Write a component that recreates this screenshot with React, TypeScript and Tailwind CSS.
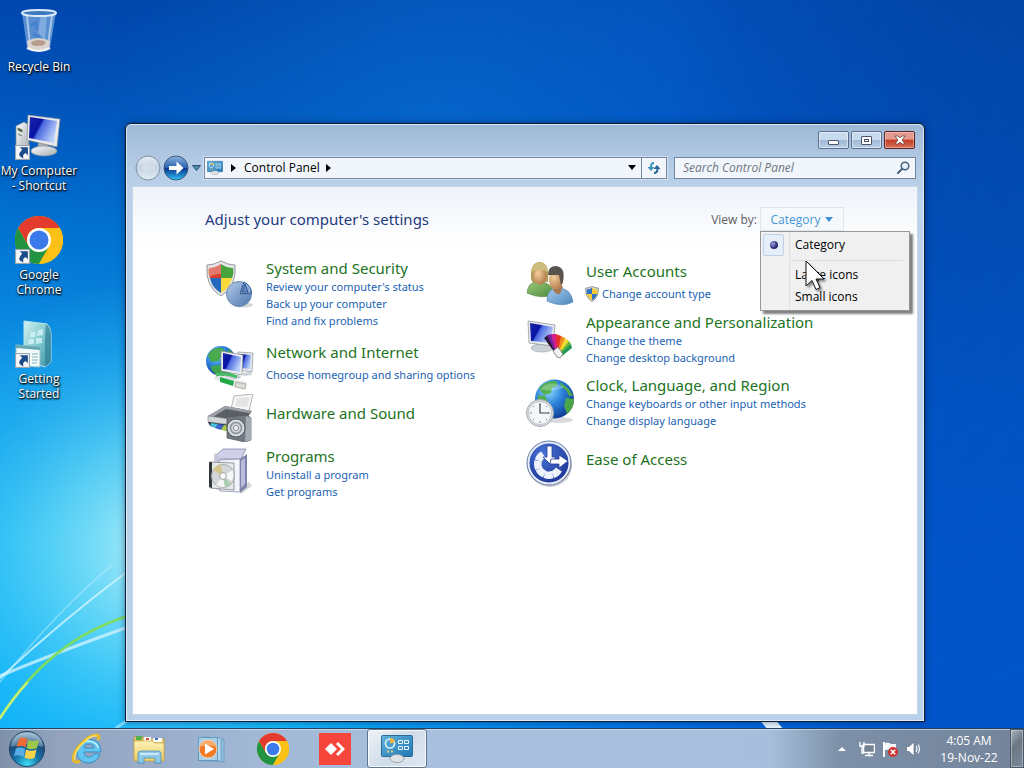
import { useState } from "react"
import type { ReactNode } from "react"

type Category = {
  title: string
  icon: ReactNode
  links: string[]
  shield?: boolean
  className: string
  textClassName?: string
}

function SharedGradients() {
  return (
    <svg className="absolute h-0 w-0" aria-hidden="true">
      <defs>
        <linearGradient id="screen" x1="0" y1="0" x2="1" y2="0.5">
          <stop offset="0" stopColor="#1526a8" />
          <stop offset="0.42" stopColor="#0a12a4" />
          <stop offset="0.5" stopColor="#4a68e0" />
          <stop offset="1" stopColor="#b9d0fa" />
        </linearGradient>
        <radialGradient id="globe" cx="0.35" cy="0.3" r="0.75">
          <stop offset="0" stopColor="#8fdcff" />
          <stop offset="0.45" stopColor="#2f86dc" />
          <stop offset="1" stopColor="#0b3a94" />
        </radialGradient>
        <linearGradient id="metal" x1="0" y1="0" x2="1" y2="1">
          <stop offset="0" stopColor="#ffffff" />
          <stop offset="1" stopColor="#a4abb2" />
        </linearGradient>
        <linearGradient id="orbBlue" x1="0" y1="0" x2="0" y2="1">
          <stop offset="0" stopColor="#8eb4dc" />
          <stop offset="0.48" stopColor="#2b62b4" />
          <stop offset="0.52" stopColor="#0a3590" />
          <stop offset="1" stopColor="#2fc0f4" />
        </linearGradient>
        <linearGradient id="orbGrey" x1="0" y1="0" x2="0" y2="1">
          <stop offset="0" stopColor="#e6eef5" />
          <stop offset="0.5" stopColor="#c4d2df" />
          <stop offset="1" stopColor="#e3eef6" />
        </linearGradient>
        <radialGradient id="orbStart" cx="0.5" cy="0.95" r="0.9">
          <stop offset="0" stopColor="#3fe0f4" />
          <stop offset="0.4" stopColor="#1676ac" />
          <stop offset="0.75" stopColor="#1a4a78" />
          <stop offset="1" stopColor="#7fa6c4" />
        </radialGradient>
        <linearGradient id="panel" x1="0" y1="0" x2="1" y2="1">
          <stop offset="0" stopColor="#62b4de" />
          <stop offset="1" stopColor="#1f76b4" />
        </linearGradient>
        <linearGradient id="teal" x1="0" y1="0" x2="1" y2="1">
          <stop offset="0" stopColor="#d4f2f2" />
          <stop offset="0.6" stopColor="#6fc0c8" />
          <stop offset="1" stopColor="#3a8fa6" />
        </linearGradient>
        <radialGradient id="skin" cx="0.35" cy="0.35" r="0.8">
          <stop offset="0" stopColor="#f6cf9f" />
          <stop offset="1" stopColor="#a8713f" />
        </radialGradient>
        <linearGradient id="greenShirt" x1="0" y1="0" x2="1" y2="1">
          <stop offset="0" stopColor="#9cc878" />
          <stop offset="1" stopColor="#4c8a3c" />
        </linearGradient>
        <linearGradient id="blueShirt" x1="0" y1="0" x2="1" y2="1">
          <stop offset="0" stopColor="#a6cdf0" />
          <stop offset="1" stopColor="#4d86bc" />
        </linearGradient>
        <linearGradient id="folder" x1="0" y1="0" x2="0" y2="1">
          <stop offset="0" stopColor="#fdf3b8" />
          <stop offset="1" stopColor="#eccb62" />
        </linearGradient>
        <radialGradient id="access" cx="0.4" cy="0.3" r="0.8">
          <stop offset="0" stopColor="#4a74d8" />
          <stop offset="1" stopColor="#152c8c" />
        </radialGradient>
        <linearGradient id="pie" x1="0" y1="0" x2="1" y2="1">
          <stop offset="0" stopColor="#b7cdea" />
          <stop offset="1" stopColor="#4a74ac" />
        </linearGradient>
      </defs>
    </svg>
  )
}

function Wallpaper() {
  return (
    <svg className="absolute inset-0 h-full w-full" viewBox="0 0 1024 768" preserveAspectRatio="none" aria-hidden="true">
      <defs>
        <linearGradient id="sky" x1="0" y1="0" x2="0" y2="1">
          <stop offset="0" stopColor="#0149b2" />
          <stop offset="0.14" stopColor="#0158c0" />
          <stop offset="0.3" stopColor="#0279d8" />
          <stop offset="0.5" stopColor="#109cec" />
          <stop offset="0.7" stopColor="#1cb8f6" />
          <stop offset="1" stopColor="#0ab0fa" />
        </linearGradient>
        <linearGradient id="rightShade" x1="0" y1="0" x2="1" y2="0">
          <stop offset="0.28" stopColor="#0058d0" stopOpacity="0" />
          <stop offset="0.65" stopColor="#0064e4" stopOpacity="0.85" />
          <stop offset="0.92" stopColor="#0054c8" />
        </linearGradient>
        <linearGradient id="topShade" x1="0" y1="0" x2="0" y2="1">
          <stop offset="0" stopColor="#043f96" stopOpacity="0.85" />
          <stop offset="0.3" stopColor="#0346a4" stopOpacity="0.7" />
          <stop offset="1" stopColor="#0060dc" stopOpacity="0" />
        </linearGradient>
        <linearGradient id="shadeMask" x1="0" y1="0" x2="1" y2="0">
          <stop offset="0" stopColor="#222" />
          <stop offset="1" stopColor="#ccc" />
        </linearGradient>
        <mask id="fadeRight">
          <rect width="1024" height="768" fill="url(#shadeMask)" />
        </mask>
        <radialGradient id="glow" gradientUnits="userSpaceOnUse" cx="160" cy="550" r="270">
          <stop offset="0" stopColor="#c0f4fa" stopOpacity="0.95" />
          <stop offset="0.4" stopColor="#7ce4f8" stopOpacity="0.6" />
          <stop offset="0.75" stopColor="#40ccf8" stopOpacity="0.25" />
          <stop offset="1" stopColor="#40c8f8" stopOpacity="0" />
        </radialGradient>
        <radialGradient id="topGlow" gradientUnits="userSpaceOnUse" cx="430" cy="140" r="330">
          <stop offset="0" stopColor="#0a78dc" stopOpacity="0.5" />
          <stop offset="1" stopColor="#0a78dc" stopOpacity="0" />
        </radialGradient>
      </defs>
      <rect width="1024" height="768" fill="url(#sky)" />
      <rect width="1024" height="768" fill="url(#rightShade)" />
      <rect width="1024" height="768" fill="url(#topShade)" mask="url(#fadeRight)" />
      <rect width="1024" height="768" fill="url(#topGlow)" />
      <rect width="450" height="768" fill="url(#glow)" />
      <g fill="none" strokeLinecap="round">
        <path d="M0 678Q60 622 128 571" stroke="#d4f6ff" strokeWidth="2" opacity="0.8" />
        <path d="M0 682Q60 608 112 565" stroke="#c4f2ff" strokeWidth="1.5" opacity="0.5" />
        <path d="M0 676Q50 655 128 627" stroke="#d4f6ff" strokeWidth="3" opacity="0.75" />
        <path d="M0 718Q50 640 128 616" stroke="#7fdc5c" strokeWidth="2.5" />
        <path d="M0 718Q14 697 27 683" stroke="#c8f078" strokeWidth="2.5" />
        <path d="M116 728L128 720" stroke="#a8e8ff" strokeWidth="3" opacity="0.7" />
      </g>
      <path d="M758 718L774 718L784 730L768 730Z" fill="#e8f6ff" />
    </svg>
  )
}

function RecycleBinIcon() {
  return (
    <svg viewBox="0 0 48 48" className="h-12 w-12" aria-hidden="true">
      <path d="M7 4L12 40Q24 47 35 40L41 4Z" fill="#8fb9e4" opacity="0.62" />
      <path d="M12 8L15 37M37 8L33 37" stroke="#e4f2ff" strokeWidth="2" opacity="0.55" />
      <path d="M26 6L32 7L30 32L23 25Z" fill="#c9e0f8" opacity="0.35" />
      <path d="M16 18L21 14L22 22M18 26L25 29" stroke="#3978cc" strokeWidth="3" fill="none" opacity="0.6" />
      <path d="M12 33Q23 27 35 33L34 41Q24 46 13 41Z" fill="#d9d4d0" />
      <path d="M16 34Q24 30 31 34L29 37Q23 39 17 37Z" fill="#b89c8c" />
      <ellipse cx="24" cy="5" rx="17" ry="3" fill="#3e78bc" stroke="#dcebfa" strokeWidth="2" />
      <path d="M12 40Q24 46 35 40" stroke="#f2f5f8" strokeWidth="2" fill="none" />
    </svg>
  )
}

function ComputerIcon() {
  return (
    <svg viewBox="0 0 48 48" className="h-12 w-12" aria-hidden="true">
      <path d="M1 14L9 10L14 13V33L7 39L1 36Z" fill="url(#metal)" stroke="#7a8590" strokeWidth="0.7" />
      <path d="M3 16L7 18V20L3 18ZM3 22L7 24" stroke="#5f7a48" fill="#47545e" />
      <path d="M24 28L32 30L34 37L22 37Z" fill="#a9b0b8" />
      <ellipse cx="29" cy="39" rx="13" ry="5" fill="url(#metal)" stroke="#87909a" strokeWidth="0.7" />
      <path d="M13 3L45 7L42 35L12 28Z" fill="#e9eaea" stroke="#7f8992" strokeWidth="0.7" />
      <path d="M15 5L42 9L39 31L14 26Z" fill="url(#screen)" />
    </svg>
  )
}

function ChromeIcon({ className }: { className: string }) {
  return (
    <svg viewBox="0 0 48 48" className={className} aria-hidden="true">
      <circle cx="24" cy="24" r="24" fill="#fbc116" />
      <path d="M3.2 12A24 24 0 0 0 24 48L34.4 30L24 24L13.6 30Z" fill="#229342" />
      <path d="M24 12H44.8A24 24 0 0 1 24 48L34.4 30Z" fill="#fbc116" />
      <path d="M3.2 12A24 24 0 0 1 44.8 12H24A12 12 0 0 0 13.6 30Z" fill="#e33b2e" />
      <circle cx="24" cy="24" r="12" fill="#fff" />
      <circle cx="24" cy="24" r="9.5" fill="#3c79ea" />
    </svg>
  )
}

function GettingStartedIcon() {
  return (
    <svg viewBox="0 0 48 48" className="h-12 w-12" aria-hidden="true">
      <path d="M9 1L32 4Q37 9 36 20V42L30 47L9 40Z" fill="url(#teal)" stroke="#b8e4ea" />
      <path d="M31 4Q37 9 36 20V42L30 47V18Z" fill="#328096" opacity="0.7" />
      <path d="M16 12L21 12L20 17L15 17ZM23 10L28 9L28 15L22 16ZM14 19L19 19L19 24L13 24ZM21 18L27 18V23L21 24Z" fill="#d8f6f8" opacity="0.75" />
      <path d="M1 25L25 27V47L1 46Z" fill="#f2fafa" stroke="#91bcc2" />
      <path d="M1 25L25 27V30L1 28Z" fill="#5fa8b4" />
      <path d="M17 34H23M17 37H23M17 40H23M17 43H22" stroke="#7eb4be" />
    </svg>
  )
}

function ShortcutArrow() {
  return (
    <svg viewBox="0 0 14 14" className="absolute bottom-0 left-0 h-[15px] w-[15px]" aria-hidden="true">
      <rect x="0.5" y="0.5" width="13" height="13" fill="#f4f6f8" stroke="#9aa6b2" />
      <path d="M4.500 2H12V9.500L9.800 7.400Q6.500 9 8 12.500Q0.500 10 6.800 4.500Z" fill="#1d4a88" />
    </svg>
  )
}

function Shield({ className }: { className: string }) {
  return (
    <svg viewBox="0 0 32 38" className={className} aria-hidden="true">
      <path d="M16 1Q23 5 31 5Q32 27 16 37Q0 27 1 5Q9 5 16 1Z" fill="#dcdfe2" stroke="#7c8288" strokeWidth="2" />
      <path d="M16 4V19H4Q3 14 4 8Q10 8 16 4Z" fill="#3474c4" />
      <path d="M16 4V19H28Q29 14 28 8Q22 8 16 4Z" fill="#f4c93a" />
      <path d="M4 19H16V34Q6 28 4 19Z" fill="#f4c93a" />
      <path d="M28 19H16V34Q26 28 28 19Z" fill="#3474c4" />
    </svg>
  )
}

function SecurityIcon() {
  return (
    <svg viewBox="0 0 48 48" className="h-12 w-12" aria-hidden="true">
      <path d="M15 1Q22 5 29 5Q31 27 15 36Q-1 27 1 5Q8 5 15 1Z" fill="#e4e6e8" stroke="#95999e" />
      <path d="M15 4V18H4Q2 14 3 8Q9 8 15 4Z" fill="#d6402c" />
      <path d="M15 4V18H26Q28 14 27 8Q21 8 15 4Z" fill="#45a43c" />
      <path d="M4 18H15V33Q6 28 4 18Z" fill="#2668bc" />
      <path d="M26 18H15V33Q24 28 26 18Z" fill="#f8d83a" />
      <path d="M3 8Q9 8 15 4V14Q8 14 3 17Z" fill="#fff" opacity="0.3" />
      <ellipse cx="37" cy="45" rx="10" ry="2.500" fill="#9098a2" opacity="0.4" />
      <circle cx="33" cy="34" r="12.500" fill="url(#pie)" stroke="#6a88b0" />
      <path d="M34 34L38 22A13 13 0 0 1 45.500 33Z" fill="#8eafda" stroke="#33578e" />
      <path d="M36 32L39 24L42 32Z" fill="#5f8cc8" stroke="#33578e" />
    </svg>
  )
}

function NetworkIcon() {
  return (
    <svg viewBox="0 0 48 48" className="h-12 w-12" aria-hidden="true">
      <circle cx="15" cy="17" r="15" fill="url(#globe)" />
      <path d="M2 11Q7 2 16 4L21 9L15 12L13 17L5 18ZM22 5L28 10L26 15L22 12ZM5 22L14 21L18 28L12 31Q5 28 5 22Z" fill="#45a83c" opacity="0.9" />
      <path d="M32 8L47 9L46 28L32 26Z" fill="#e5e7ea" stroke="#8c939a" strokeWidth="0.7" />
      <path d="M34 10L45 11L44 25L34 24Z" fill="url(#screen)" />
      <path d="M36 29L45 28L46 31L38 32Z" fill="#cdd2d6" />
      <ellipse cx="27" cy="33" rx="8" ry="2.6" fill="#c8cdd2" />
      <path d="M15 7L37 11L36 31L15 27Z" fill="#eceeef" stroke="#858c94" strokeWidth="0.7" />
      <path d="M17 9L35 13L34 28L17 25Z" fill="url(#screen)" />
      <path d="M9 32Q20 37 40 41" stroke="#e4e8e8" strokeWidth="6" fill="none" />
      <path d="M14 33L28 37L27 42L14 38Z" fill="#24a848" />
      <path d="M30 38L40 40L39 45L29 43Z" fill="#dcdcd8" stroke="#96968e" strokeWidth="0.7" />
      <path d="M10 31Q20 28 31 33" stroke="#48bc64" strokeWidth="3" fill="none" />
    </svg>
  )
}

function HardwareIcon() {
  return (
    <svg viewBox="0 0 48 48" className="h-12 w-12" aria-hidden="true">
      <path d="M28 2L47 0L43 17L25 15Z" fill="#f6f6f6" stroke="#9da2a8" strokeWidth="0.8" />
      <path d="M31 4L44 3L41 13L29 12Z" fill="#e2e4e6" />
      <path d="M2 22L19 12L46 17L38 28Z" fill="#5b6066" />
      <path d="M2 22L19 12L46 17L43 19L20 15L5 24Z" fill="#9ca1a7" />
      <path d="M2 22L37 27V32L2 28Z" fill="#d4d7da" stroke="#868c92" strokeWidth="0.7" />
      <path d="M2 28L24 31L21 37L4 32Z" fill="#232a32" />
      <path d="M5 29L12 30L10 34L4 32Z" fill="#49bcdc" />
      <path d="M12 30L18 31L15 36L9 34Z" fill="#3d62cc" />
      <path d="M18 31L24 32L21 37L15 36Z" fill="#a9cc48" />
      <path d="M21 23L41 21L45 24V46L39 48L21 44Z" fill="#737980" stroke="#4f555c" strokeWidth="0.7" />
      <path d="M40 22L45 24V46L39 48Z" fill="#a4abb4" />
      <circle cx="30" cy="34" r="9" fill="#d5d9dd" stroke="#555b61" />
      <circle cx="30" cy="34" r="5.500" fill="none" stroke="#8a929a" strokeWidth="1.5" />
      <circle cx="30" cy="34" r="2.600" fill="#eceff1" stroke="#868e96" />
    </svg>
  )
}

function ProgramsIcon() {
  return (
    <svg viewBox="0 0 48 48" className="h-12 w-12" aria-hidden="true">
      <path d="M35 46L46 38L43 34L34 40Z" fill="#98989e" opacity="0.4" />
      <path d="M9 8L17 1H40L35 11H10Z" fill="#cfd0ea" stroke="#8789aa" strokeWidth="0.8" />
      <path d="M8 5L15 10V43L9 40Z" fill="#c6c7da" />
      <path d="M13 12L34 11V44L14 43Z" fill="#f4f4fb" stroke="#8d90b2" strokeWidth="0.8" />
      <path d="M34 11L41 6V39L34 45Z" fill="#8083ac" />
      <path d="M35 13L39 10V36L35 40Z" fill="#babcdb" />
      <path d="M4 14L28 15V42L4 40Z" fill="#e6e8e8" stroke="#7f8588" strokeWidth="0.8" />
      <path d="M3 14H6V40L3 39Z" fill="#33373a" />
      <circle cx="17" cy="28" r="11.500" fill="#d4d6d8" stroke="#a4a8ac" />
      <path d="M17 28L7 22Q10 17 15 17Z" fill="#d4c489" />
      <path d="M17 28L27 22Q28 28 26 33Z" fill="#f6f7f8" />
      <path d="M17 28L10 37Q15 40 19 39Z" fill="#f4f4f4" />
      <path d="M17 28L25 36Q22 39 19 39Z" fill="#a9cdb1" />
      <circle cx="17" cy="28" r="3.400" fill="#fff" stroke="#9ba0a4" />
    </svg>
  )
}

function UsersIcon() {
  return (
    <svg viewBox="0 0 48 48" className="h-12 w-12" aria-hidden="true">
      <path d="M1 33Q2 21 13 22Q26 22 28 34Q17 40 1 33Z" fill="url(#greenShirt)" stroke="#5c8a4a" strokeWidth="0.7" />
      <path d="M5 19Q4 3 13 2Q24 2 22 22L7 23Z" fill="#b39a58" />
      <ellipse cx="14" cy="16" rx="6.500" ry="8.500" fill="url(#skin)" />
      <path d="M5 12Q6 2 14 2Q22 3 22 12Q14 7 5 12Z" fill="#cdbd7c" />
      <path d="M21 41Q21 28 32 28Q45 28 47 42Q36 48 21 41Z" fill="url(#blueShirt)" stroke="#5a88b4" strokeWidth="0.7" />
      <path d="M27 26H37L34 34Q30 35 27 30Z" fill="#a87850" />
      <ellipse cx="30" cy="20" rx="7" ry="9.500" fill="url(#skin)" />
      <path d="M22 15Q22 6 30 6Q40 7 37 22L35 25L33 15Z" fill="#5a5450" />
    </svg>
  )
}

function AppearanceIcon() {
  return (
    <svg viewBox="0 0 48 48" className="h-12 w-12" aria-hidden="true">
      <ellipse cx="16" cy="32" rx="11" ry="4" fill="#cbd0d4" stroke="#9ba2a8" strokeWidth="0.6" />
      <path d="M2 5L29 9L27 30L3 27Z" fill="#e9ebec" stroke="#878e95" strokeWidth="0.7" />
      <path d="M4 7L27 11L25 27L5 25Z" fill="url(#screen)" />
      <path d="M31 40L18 22L22 19L34 37Z" fill="#2d1738" />
      <path d="M31 40L21 19L26 18L35 37Z" fill="#7422a4" />
      <path d="M31 40L25 18L30 18L36 38Z" fill="#d4218c" />
      <path d="M31 40L30 18L35 20L36 38Z" fill="#e62f28" />
      <path d="M31 40L35 20L39 22L36 38Z" fill="#f38b20" />
      <path d="M31 40L39 22L43 25L36 39Z" fill="#f3dc30" />
      <path d="M31 40L43 25L45 28L36 40Z" fill="#68b83c" />
      <path d="M31 40L45 28L46 32L36 40Z" fill="#249854" />
      <path d="M27 35L32 31L37 38L34 42L31 41Z" fill="#f3f3f3" stroke="#63666a" strokeWidth="0.7" />
    </svg>
  )
}

function ClockIcon() {
  return (
    <svg viewBox="0 0 48 48" className="h-12 w-12" aria-hidden="true">
      <ellipse cx="33" cy="41" rx="14" ry="3" fill="#8f959c" opacity="0.35" />
      <circle cx="28.500" cy="20" r="19.500" fill="url(#globe)" />
      <path d="M13 9Q20 1 30 2L32 6L26 9L25 14L18 16L15 12ZM34 3L43 10L47 17L43 17L40 11L35 8ZM40 19L48 20Q48 30 41 35L38 27ZM12 16L19 17L22 22L12 24Z" fill="#52ae40" opacity="0.9" />
      <path d="M14 10Q24 0 38 8Q30 14 14 10Z" fill="#fff" opacity="0.25" />
      <circle cx="14" cy="34" r="13.500" fill="#d5d9dc" stroke="#a8aeb4" />
      <circle cx="14" cy="34" r="11.500" fill="#f4f6f7" stroke="#c0c5c9" />
      <path d="M14 24V26M14 42V44M4 34H6M22 34H24M7 27L8 28M21 27L20 28M7 41L8 40M21 41L20 40" stroke="#7d858c" />
      <path d="M14 25V34H23" stroke="#3f464d" strokeWidth="1.2" fill="none" />
    </svg>
  )
}

// Spokes of the access wheel, the two upper-right ones are replaced by arrows
const wheelAngles = [140, 182, 224, 266, 308]

function EaseIcon() {
  return (
    <svg viewBox="0 0 48 48" className="h-12 w-12" aria-hidden="true">
      <circle cx="24" cy="25" r="22" fill="#79808a" opacity="0.4" />
      <circle cx="23" cy="23" r="22" fill="url(#access)" stroke="#6f7f9c" />
      <circle cx="23" cy="23" r="20.500" fill="none" stroke="#e8eef7" strokeWidth="2" />
      {wheelAngles.map((angle) => (
        <path key={angle} d="M20 17L18 10Q23 8 28 10L26 17Q23 16 20 17Z" fill="#eef2fa" transform={`rotate(${angle} 23 24)`} />
      ))}
      <path d="M21 6H26V17H30L24 24L17 17H21Z" fill="#fff" stroke="#244098" strokeWidth="0.8" />
      <path d="M25 19H33V15L42 21L33 28V24H24Z" fill="#fff" stroke="#244098" strokeWidth="0.8" />
    </svg>
  )
}

function ControlPanelIcon({ className }: { className: string }) {
  return (
    <svg viewBox="0 0 32 28" className={className} aria-hidden="true">
      <rect x="0.5" y="0.5" width="31" height="21" rx="1" fill="url(#panel)" stroke="#2e6a96" />
      <circle cx="9" cy="8.500" r="4.500" fill="none" stroke="#e2f2fb" strokeWidth="1.6" />
      <path d="M9 8.500V3A5 5 0 0 1 14 7Z" fill="#f4b53c" />
      <path d="M17.500 5.500H21.500V8.500H17.500ZM23.500 5.500H27.500V8.500H23.500ZM17.500 11.500H21.500V14.500H17.500ZM23.500 11.500H27.500V14.500H23.500Z" fill="none" stroke="#e8f6fd" />
      <path d="M6 16.500H8M10 16.500H12" stroke="#f0d070" strokeWidth="2" />
      <ellipse cx="16" cy="23.500" rx="7" ry="4" fill="#dfe3e6" stroke="#8e979e" strokeWidth="0.8" />
    </svg>
  )
}

function StartOrb() {
  return (
    <svg viewBox="0 0 38 38" className="h-[38px] w-[38px]" aria-hidden="true">
      <circle cx="19" cy="19" r="17.500" fill="url(#orbStart)" stroke="#1c4468" />
      <path d="M3 17Q4 3 19 2.500Q34 3 35 17Q19 11 3 17Z" fill="#fff" opacity="0.3" />
      <path d="M11 9Q15 6 19.500 9L17.500 17.500Q14 15 8.500 17Z" fill="#ee6b35" />
      <path d="M20.500 9.500Q25 12.500 31 9.500L29 18Q23 20.500 18.500 18Z" fill="#9cc84a" />
      <path d="M8 18.500Q13 16.500 17 19L15.500 27Q11.500 24 6 26Z" fill="#58aee4" />
      <path d="M18 19.500Q23 22 28.500 19.500L26.500 28Q21 30 16.500 27.500Z" fill="#f9d24a" />
    </svg>
  )
}

function ExplorerIcon() {
  return (
    <svg viewBox="0 0 32 32" className="h-8 w-8" aria-hidden="true">
      <path d="M1 4H10L12 6H31V26H1Z" fill="#e5c86c" stroke="#b8953c" strokeWidth="0.7" />
      <path d="M3 3H9V7H3Z" fill="#58b04c" />
      <path d="M11 4H18V8H11ZM20 5H29V9H20Z" fill="#fff" />
      <path d="M13 6H16" stroke="#d24a32" strokeWidth="2" />
      <path d="M22 6H25" stroke="#3e7ac4" strokeWidth="2" />
      <path d="M1 8H19L22 10H31V28H1Z" fill="url(#folder)" stroke="#c5a346" strokeWidth="0.7" />
      <path d="M5 30V21Q5 18 8 18H25Q28 18 28 21V30H22V25H11V30Z" fill="#8fc8e8" stroke="#4a90b8" strokeWidth="0.8" />
      <path d="M7 21H26" stroke="#dcf0fa" strokeWidth="1.5" />
    </svg>
  )
}

function MediaPlayerIcon() {
  return (
    <svg viewBox="0 0 30 30" className="h-[30px] w-[30px]" aria-hidden="true">
      <path d="M9 3L28 5V28L9 26Z" fill="#91bddd" stroke="#6ea0c4" />
      <path d="M6 3L25 4V27L6 27Z" fill="#b3d6ec" stroke="#6ea4c8" />
      <rect x="2.500" y="3.500" width="19" height="23" fill="#a9cfe8" stroke="#5f9ac0" />
      <circle cx="12" cy="15" r="9" fill="#ee7a26" stroke="#f9d3ad" />
      <path d="M4 13Q5 6 12 6Q19 7 20 13Q12 10 4 13Z" fill="#ffc796" opacity="0.6" />
      <path d="M9 9.500V20.500L18 15Z" fill="#fff" />
    </svg>
  )
}

function ExplorerE() {
  return (
    <svg viewBox="0 0 32 32" className="h-8 w-8" aria-hidden="true">
      <path d="M30 19H13Q13 24 18 24Q21 24 23 21H29Q26 30 17 30Q6 29 6 18Q7 6 18 6Q30 7 30 19ZM13 15H23Q23 11 18 11Q13 11 13 15Z" fill="#62c4f0" stroke="#2486c0" strokeWidth="0.8" />
      <path d="M9 13Q12 8 18 8Q26 9 27 15" stroke="#c6eefc" strokeWidth="1.5" fill="none" />
      <path d="M27 7Q29 2 26 2Q19 1 9 12Q0 23 3 28Q5 30 9 28" stroke="#e8b922" strokeWidth="3" fill="none" />
      <path d="M26 3Q19 2 10 12Q2 21 4 27" stroke="#ffe976" strokeWidth="1.2" fill="none" />
    </svg>
  )
}

function AnyDeskIcon() {
  return (
    <svg viewBox="0 0 32 32" className="h-8 w-8" aria-hidden="true">
      <rect width="32" height="32" fill="#f6453a" />
      <path d="M12 10L18 16L12 22L6 16Z" fill="#fff" />
      <path d="M17 11L19 9L26 16L19 23L17 21L22 16Z" fill="#fff" />
    </svg>
  )
}

const desktopIcons = [
  { label: "Recycle Bin", icon: <RecycleBinIcon />, shortcut: false },
  { label: "My Computer - Shortcut", icon: <ComputerIcon />, shortcut: true },
  { label: "Google Chrome", icon: <ChromeIcon className="h-12 w-12" />, shortcut: true, narrow: true },
  { label: "Getting Started", icon: <GettingStartedIcon />, shortcut: true, narrow: true },
]

const leftCategories: Category[] = [
  {
    title: "System and Security",
    icon: <SecurityIcon />,
    links: ["Review your computer's status", "Back up your computer", "Find and fix problems"],
    className: "items-start",
  },
  {
    title: "Network and Internet",
    icon: <NetworkIcon />,
    links: ["Choose homegroup and sharing options"],
    className: "mt-[13px] items-start",
  },
  {
    title: "Hardware and Sound",
    icon: <HardwareIcon />,
    links: [],
    className: "items-start",
    textClassName: "pt-[11px]",
  },
  {
    title: "Programs",
    icon: <ProgramsIcon />,
    links: ["Uninstall a program", "Get programs"],
    className: "mt-1 items-start",
  },
]

const rightCategories: Category[] = [
  {
    title: "User Accounts",
    icon: <UsersIcon />,
    links: ["Change account type"],
    shield: true,
    className: "items-start",
    textClassName: "pt-[3px]",
  },
  {
    title: "Appearance and Personalization",
    icon: <AppearanceIcon />,
    links: ["Change the theme", "Change desktop background"],
    className: "mt-1 items-center",
  },
  {
    title: "Clock, Language, and Region",
    icon: <ClockIcon />,
    links: ["Change keyboards or other input methods", "Change display language"],
    className: "mt-[9px] items-center",
  },
  {
    title: "Ease of Access",
    icon: <EaseIcon />,
    links: [],
    className: "mt-[9px] items-start",
    textClassName: "pt-[11px]",
  },
]

const taskbarApps = [
  { name: "Internet Explorer", icon: <ExplorerE /> },
  { name: "Windows Explorer", icon: <ExplorerIcon /> },
  { name: "Windows Media Player", icon: <MediaPlayerIcon /> },
  { name: "Google Chrome", icon: <ChromeIcon className="h-8 w-8" /> },
  { name: "AnyDesk", icon: <AnyDeskIcon /> },
]

function CategoryItem({ title, icon, links, shield, className, textClassName }: Category) {
  return (
    <li className={`flex gap-3 font-['Noto_Sans',sans-serif] ${className}`}>
      <div className="mt-[2px] h-12 w-12 shrink-0">{icon}</div>
      <div className={textClassName}>
        <h2 className="text-[15px] leading-5 whitespace-nowrap">
          <a href="#" className="text-[#1c7423] hover:underline">
            {title}
          </a>
        </h2>
        <ul className={links.length === 1 ? "pt-1" : ""}>
          {links.map((link) => (
            <li key={link} className="flex h-[17px] text-[11px] leading-[17px] whitespace-nowrap">
              <a href="#" className="flex items-center gap-[3px] text-[#1a62b4] hover:underline">
                {shield && <Shield className="-ml-px h-4 w-[14px]" />}
                {link}
              </a>
            </li>
          ))}
        </ul>
      </div>
    </li>
  )
}

function ViewMenu({ view, onSelect }: { view: string; onSelect: (view: string) => void }) {
  return (
    <div
      role="menu"
      className="absolute top-full left-0 z-10 w-[150px] border border-[#979797] bg-[linear-gradient(90deg,#f1f1f1_28px,#e0e0e0_28px,#e0e0e0_29px,#f0f0f0_29px)] p-[2px] text-black shadow-[3px_3px_2px_rgba(0,0,0,0.5)]"
    >
      {["Category", "Large icons", "Small icons"].map((item) => (
        <div key={item} className={item === "Category" ? "mb-[3px] bg-[linear-gradient(#dcdcdc,#dcdcdc)] bg-[length:112px_1px] bg-[position:right_4px_bottom] bg-no-repeat pb-[5px]" : ""}>
          <button
            role="menuitemradio"
            aria-checked={view === item}
            onClick={() => onSelect(item)}
            className="flex h-[22px] w-full items-center gap-[11px] text-left leading-[22px] hover:bg-[#e4ecf8]"
          >
            <span
              className={`flex h-[22px] w-[21px] items-center justify-center rounded-xs border ${view === item ? "border-[#bcd0ea] bg-[#e6eef8]" : "border-transparent"}`}
            >
              {view === item && (
                <span className="h-2 w-2 rounded-full bg-[radial-gradient(circle_at_35%_35%,#a4a4e4,#2a2a78_60%)]" />
              )}
            </span>
            {item}
          </button>
        </div>
      ))}
      <svg viewBox="0 0 20 31" className="pointer-events-none absolute top-7 left-[44px] h-[31px] w-5 drop-shadow-[2px_2px_1px_rgba(0,0,0,0.45)]" aria-hidden="true">
        <path d="M1 1V26L7 20.500L11 29.500L15 27.500L11 19H19Z" fill="#fff" stroke="#111" />
      </svg>
    </div>
  )
}

function ControlPanelWindow() {
  const [view, setView] = useState("Category")
  const [menuOpen, setMenuOpen] = useState(true)

  return (
    <main className="absolute top-[123px] right-[99px] bottom-[46px] left-[125px] flex flex-col rounded-t-md border border-[#0d1c30] bg-[linear-gradient(#9db8d6,#b4cbe5_40px,#bcd2ea_70px,#b9d1e8)] px-[6px] pb-[6px] shadow-[inset_0_0_0_1px_rgba(235,246,255,0.75),0_0_7px_rgba(0,20,60,0.5)]">
      <div className="flex h-[25px] items-end justify-end gap-[2px] pr-[3px]">
        <button aria-label="Minimize" className="flex h-[18px] w-[31px] items-center justify-center rounded-[2px] border border-[#5a6f8c] bg-[linear-gradient(#c8daee_50%,#9fb8d6_50%,#b8cee6)] shadow-[inset_0_0_0_1px_rgba(255,255,255,0.5)]">
          <span className="mt-1 h-[5px] w-[11px] rounded-[1px] border border-[#4b5569] bg-white" />
        </button>
        <button aria-label="Maximize" className="flex h-[18px] w-[31px] items-center justify-center rounded-[2px] border border-[#5a6f8c] bg-[linear-gradient(#c8daee_50%,#9fb8d6_50%,#b8cee6)] shadow-[inset_0_0_0_1px_rgba(255,255,255,0.5)]">
          <span className="flex h-[9px] w-[11px] items-center justify-center rounded-[1px] border border-[#4b5569] bg-white">
            <span className="h-[3px] w-[5px] border border-[#4b5569]" />
          </span>
        </button>
        <button aria-label="Close" className="flex h-[18px] w-[31px] items-center justify-center rounded-[2px] border border-[#5c2220] bg-[linear-gradient(#e39a8c_45%,#c23c24_50%,#d8705a)] shadow-[inset_0_0_0_1px_rgba(255,255,255,0.35)]">
          <svg viewBox="0 0 12 10" className="h-[10px] w-3" aria-hidden="true">
            <path d="M1 1H4L6 3L8 1H11L8 5L11 9H8L6 7L4 9H1L4 5Z" fill="#fff" stroke="#6a4040" strokeWidth="0.8" />
          </svg>
        </button>
      </div>

      <div className="flex h-[37px] items-center pr-[2px] pl-[3px]">
        <nav className="flex items-center" aria-label="History">
          <button aria-label="Back" className="h-[26px] w-7">
            <svg viewBox="0 0 26 26" className="h-[26px] w-[26px]" aria-hidden="true">
              <circle cx="13" cy="13" r="12" fill="url(#orbGrey)" stroke="#798ea6" />
              <path d="M6 13L12 7.500V11H20V15H12V18.500Z" fill="#dbe6ee" opacity="0.6" />
            </svg>
          </button>
          <button aria-label="Forward" className="h-[26px] w-[26px]">
            <svg viewBox="0 0 26 26" className="h-[26px] w-[26px]" aria-hidden="true">
              <circle cx="13" cy="13" r="12" fill="url(#orbBlue)" stroke="#39597e" />
              <path d="M20.500 13L13.500 6.500V11H6V15H13.500V19.500Z" fill="#fff" />
            </svg>
          </button>
          <button aria-label="Recent pages" className="flex h-[22px] w-[15px] items-center justify-center">
            <svg viewBox="0 0 9 6" className="h-[6px] w-[9px]" aria-hidden="true">
              <path d="M0.500 0.500H8.500L4.500 5.500Z" fill="#4b8aaa" stroke="#29506e" />
            </svg>
          </button>
        </nav>

        <div className="flex h-[22px] min-w-0 flex-1 border border-[#70879f] bg-[#f0f6fc] shadow-[0_0_0_1px_rgba(255,255,255,0.4)]">
          <div className="flex flex-1 items-center">
            <ControlPanelIcon className="ml-[2px] h-4 w-4" />
            <span className="ml-2 border-y-4 border-l-[5px] border-y-transparent border-l-black" />
            <a href="#" className="ml-2 text-black">
              Control Panel
            </a>
            <span className="ml-[6px] border-y-4 border-l-[5px] border-y-transparent border-l-black" />
          </div>
          <button aria-label="Previous locations" className="flex w-[19px] items-center justify-center">
            <span className="border-x-4 border-t-[5px] border-x-transparent border-t-black" />
          </button>
          <button aria-label="Refresh" className="flex w-[25px] items-center justify-center border-l border-[#70879f]">
            <svg viewBox="0 0 14 14" className="h-[14px] w-[14px]" aria-hidden="true">
              <path d="M7 1Q3 1 3 6H0.500L4 10L7.500 6H5Q5 3 7 3Z" fill="#3f93b8" />
              <path d="M7 13Q11.500 13 11.500 8H13.500L10 4L6.500 8H9.500Q9.500 11 7 11Z" fill="#2d6294" />
            </svg>
          </button>
        </div>

        <label className="ml-[7px] flex h-[22px] w-[242px] items-center border border-[#70879f] bg-[#f0f6fc] pr-[5px] pl-2">
          <input
            type="text"
            aria-label="Search Control Panel"
            placeholder="Search Control Panel"
            className="min-w-0 flex-1 bg-transparent italic outline-none placeholder:text-[#70757c]"
          />
          <svg viewBox="0 0 13 13" className="h-[13px] w-[13px]" aria-hidden="true">
            <circle cx="8" cy="5" r="3.800" fill="#e3effa" stroke="#47627c" strokeWidth="1.5" />
            <path d="M5.200 7.800L1 12" stroke="#47627c" strokeWidth="2" strokeLinecap="round" />
          </svg>
        </label>
      </div>

      <section className="min-h-0 flex-1 border border-[#c4d7e8] bg-[linear-gradient(#eef3f9,#ffffff_60px)] pr-[73px] pl-[72px]">
        <div className="flex items-center justify-between pt-5">
          <h1 className="font-['Noto_Sans',sans-serif] text-[15px] leading-[22px] whitespace-nowrap text-[#1f3a80]">Adjust your computer's settings</h1>
          <div className="flex items-center text-[#5c6066]">
            <span id="view-label">View by:</span>
            <div className="relative ml-[3px]">
              <button
                id="view-button"
                aria-haspopup="menu"
                aria-expanded={menuOpen}
                aria-labelledby="view-label view-button"
                onClick={() => setMenuOpen(!menuOpen)}
                className="flex h-6 w-[84px] items-center justify-center gap-[5px] border border-[#dfe6f0] bg-[#f6f9fc] whitespace-nowrap text-[#4496d8]"
              >
                {view}
                <span className="border-x-4 border-t-[5px] border-x-transparent border-t-[#3a92dc]" />
              </button>
              {menuOpen && <ViewMenu view={view} onSelect={setView} />}
            </div>
          </div>
        </div>

        <div className="flex pt-[27px] pl-px">
          <ul className="w-80">
            {leftCategories.map((category) => (
              <CategoryItem key={category.title} {...category} />
            ))}
          </ul>
          <ul>
            {rightCategories.map((category) => (
              <CategoryItem key={category.title} {...category} />
            ))}
          </ul>
        </div>
      </section>
    </main>
  )
}

function Tray() {
  return (
    <div className="flex h-full items-center text-white">
      <button aria-label="Show hidden icons" className="mr-[10px] flex h-6 w-[14px] items-center justify-center">
        <span className="border-x-4 border-b-4 border-x-transparent border-b-white" />
      </button>
      <button aria-label="Network" className="mr-[7px]">
        <svg viewBox="0 0 16 16" className="h-4 w-4" aria-hidden="true">
          <rect x="4.500" y="3.500" width="11" height="8" fill="#75818f" stroke="#fff" strokeWidth="1.5" />
          <path d="M10 12V14M6 14.500H14M1 1V5H5V1M3 5V12H5" stroke="#fff" strokeWidth="1.4" fill="none" />
        </svg>
      </button>
      <button aria-label="Action Center" className="mr-2">
        <svg viewBox="0 0 16 16" className="h-4 w-4" aria-hidden="true">
          <path d="M2 1V16" stroke="#fff" strokeWidth="2" />
          <path d="M3 2Q7 1 9 3L14 3V10H9Q6 8 3 9Z" fill="#f5f7fa" />
          <circle cx="11" cy="11" r="5" fill="#cc3430" />
          <path d="M8.800 8.800L13.200 13.200M13.200 8.800L8.800 13.200" stroke="#fff" strokeWidth="1.6" />
        </svg>
      </button>
      <button aria-label="Volume">
        <svg viewBox="0 0 16 16" className="h-4 w-4" aria-hidden="true">
          <path d="M0.500 5.500H3L8 1V15L3 10.500H0.500Z" fill="#fff" stroke="#55606e" strokeWidth="0.6" />
          <path d="M10 5Q12 8 10 11M12 3.500Q15 8 12 12.500" stroke="#fff" fill="none" strokeWidth="1.1" />
        </svg>
      </button>
      <time className="flex w-[88px] flex-col pl-[6px] text-center leading-[17px]">
        <span>4:05 AM</span>
        <span>19-Nov-22</span>
      </time>
      <button aria-label="Show desktop" className="h-full w-[14px] border border-[#4c5866] bg-[linear-gradient(135deg,#a9b4c0,#6a7684_40%,#7c8999)] shadow-[inset_0_0_0_1px_rgba(255,255,255,0.35)]" />
    </div>
  )
}

export default function App() {
  return (
    <div className="relative flex min-h-screen flex-col overflow-hidden bg-[#0060d0] font-['Open_Sans','Noto_Sans',sans-serif] text-[12px] leading-[15px]">
      <SharedGradients />
      <Wallpaper />

      <ul className="relative flex w-[78px] flex-1 flex-col">
        {desktopIcons.map((item) => (
          <li key={item.label} className="h-[104px] pt-2">
            <button className="flex w-full flex-col items-center gap-[3px] text-center text-white [text-shadow:0_1px_2px_#000,1px_1px_2px_#000]">
              <span className="relative">
                {item.icon}
                {item.shortcut && <ShortcutArrow />}
              </span>
              <span className={item.narrow ? "w-14" : "w-20"}>{item.label}</span>
            </button>
          </li>
        ))}
      </ul>

      <ControlPanelWindow />

      <footer className="relative flex h-10 items-center justify-between border-t border-[#24425f] bg-[linear-gradient(90deg,#7f91a8,#93a3be_60px,#a0b6d4_240px,#a8c0dd_400px,#a6bfdc_770px,#7d90a8_840px,#73849a)] shadow-[inset_0_1px_0_rgba(225,240,255,0.6)]">
        <div className="flex h-full items-center">
          <button aria-label="Start" className="mr-[11px] ml-2">
            <StartOrb />
          </button>
          <div className="flex h-full gap-[2px]">
            {taskbarApps.map((app) => (
              <button key={app.name} aria-label={app.name} className="flex h-full w-[60px] items-center justify-center">
                {app.icon}
              </button>
            ))}
            <button
              aria-label="Control Panel"
              className="flex h-full w-[60px] items-center justify-center rounded-[3px] border border-[#5e7590] bg-[linear-gradient(135deg,#eef3f8,#cfdce9_50%,#dfe8f1)] shadow-[inset_0_0_0_1px_rgba(255,255,255,0.8)]"
            >
              <ControlPanelIcon className="h-7 w-8" />
            </button>
          </div>
        </div>
        <Tray />
      </footer>
    </div>
  )
}
